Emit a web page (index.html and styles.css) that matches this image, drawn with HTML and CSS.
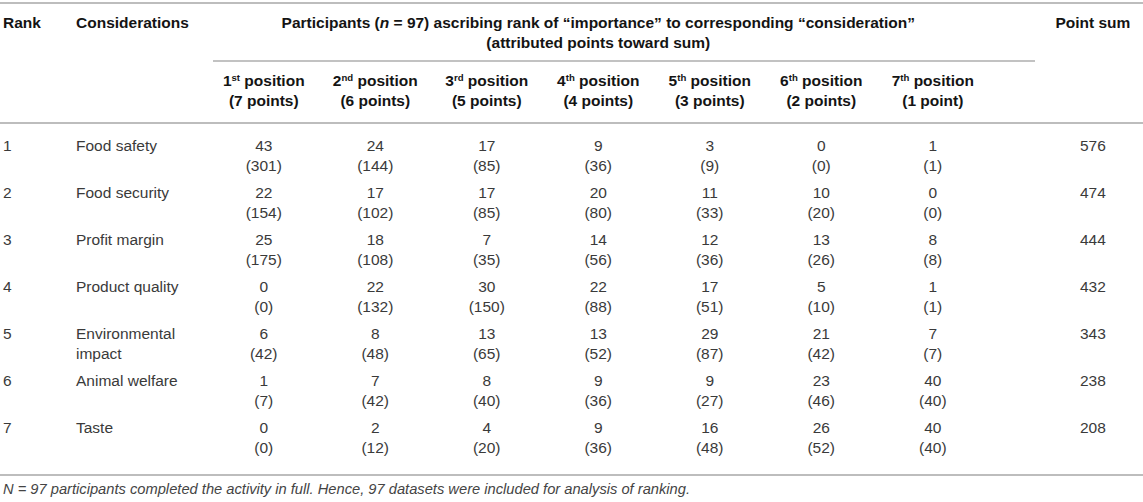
FILE: index.html
```html
<!doctype html>
<html>
<head>
<meta charset="utf-8">
<link rel="stylesheet" href="styles.css">
<title>Ranking of considerations</title>
</head>
<body>
<table class="rank-table">
<colgroup>
<col class="c-rank">
<col class="c-name">
<col class="c-pos"><col class="c-pos"><col class="c-pos"><col class="c-pos"><col class="c-pos"><col class="c-pos"><col class="c-pos">
<col class="c-sum">
</colgroup>
<thead>
<tr class="head-top">
<th rowspan="2" class="rank">Rank</th>
<th rowspan="2" class="name">Considerations</th>
<th colspan="7" class="group">
<div class="group-text">Participants (<i>n</i> = 97) ascribing rank of “importance” to corresponding “consideration”<br>(attributed points toward sum)</div>
<div class="group-rule"></div>
</th>
<th rowspan="2" class="sum">Point sum</th>
</tr>
<tr class="head-sub">
<th>1<sup>st</sup> position<br>(7 points)</th>
<th>2<sup>nd</sup> position<br>(6 points)</th>
<th>3<sup>rd</sup> position<br>(5 points)</th>
<th>4<sup>th</sup> position<br>(4 points)</th>
<th>5<sup>th</sup> position<br>(3 points)</th>
<th>6<sup>th</sup> position<br>(2 points)</th>
<th>7<sup>th</sup> position<br>(1 point)</th>
</tr>
</thead>
<tbody>
<tr>
<td class="rank">1</td><td class="name">Food safety</td>
<td>43<br>(301)</td><td>24<br>(144)</td><td>17<br>(85)</td><td>9<br>(36)</td><td>3<br>(9)</td><td>0<br>(0)</td><td>1<br>(1)</td>
<td class="sum">576</td>
</tr>
<tr>
<td class="rank">2</td><td class="name">Food security</td>
<td>22<br>(154)</td><td>17<br>(102)</td><td>17<br>(85)</td><td>20<br>(80)</td><td>11<br>(33)</td><td>10<br>(20)</td><td>0<br>(0)</td>
<td class="sum">474</td>
</tr>
<tr>
<td class="rank">3</td><td class="name">Profit margin</td>
<td>25<br>(175)</td><td>18<br>(108)</td><td>7<br>(35)</td><td>14<br>(56)</td><td>12<br>(36)</td><td>13<br>(26)</td><td>8<br>(8)</td>
<td class="sum">444</td>
</tr>
<tr>
<td class="rank">4</td><td class="name">Product quality</td>
<td>0<br>(0)</td><td>22<br>(132)</td><td>30<br>(150)</td><td>22<br>(88)</td><td>17<br>(51)</td><td>5<br>(10)</td><td>1<br>(1)</td>
<td class="sum">432</td>
</tr>
<tr>
<td class="rank">5</td><td class="name">Environmental impact</td>
<td>6<br>(42)</td><td>8<br>(48)</td><td>13<br>(65)</td><td>13<br>(52)</td><td>29<br>(87)</td><td>21<br>(42)</td><td>7<br>(7)</td>
<td class="sum">343</td>
</tr>
<tr>
<td class="rank">6</td><td class="name">Animal welfare</td>
<td>1<br>(7)</td><td>7<br>(42)</td><td>8<br>(40)</td><td>9<br>(36)</td><td>9<br>(27)</td><td>23<br>(46)</td><td>40<br>(40)</td>
<td class="sum">238</td>
</tr>
<tr>
<td class="rank">7</td><td class="name">Taste</td>
<td>0<br>(0)</td><td>2<br>(12)</td><td>4<br>(20)</td><td>9<br>(36)</td><td>16<br>(48)</td><td>26<br>(52)</td><td>40<br>(40)</td>
<td class="sum">208</td>
</tr>
</tbody>
</table>
<p class="note"><i>N</i> = 97 participants completed the activity in full. Hence, 97 datasets were included for analysis of ranking.</p>
</body>
</html>
```

FILE: styles.css
```css
body {
    margin: 0;
    background-color: white;
    font-family: "Liberation Sans", Arial, Helvetica, sans-serif;
    font-size: 15.5px;
    line-height: 20px;
    color: #3a3a3a;
}
.rank-table {
    width: 1143px;
    margin: 2px 0 0 0;
    table-layout: fixed;
    border-collapse: separate;
    border-spacing: 0;
}
.c-rank { width: 72px; }
.c-name { width: 136px; }
.c-pos { width: 111.5px; }
.c-sum { width: 154.5px; }

th,
td {
    padding: 0;
    text-align: center;
    vertical-align: top;
}
th {
    color: #141414;
    font-weight: bold;
}
.rank {
    text-align: left;
    padding-left: 3px;
}
.name {
    text-align: left;
    padding-left: 4px;
    padding-right: 8px;
}
.sum {
    padding-left: 64px;
    padding-right: 10px;
    white-space: nowrap;
}
sup {
    font-size: 0.62em;
    line-height: 0;
    vertical-align: 0.55em;
}

/* header rules */
.head-top th {
    border-top: 2px solid #bdbdbd;
    padding-top: 9px;
}
.head-top th.rank,
.head-top th.name,
.head-top th.sum {
    border-bottom: 2px solid #bdbdbd;
}
.group-text {
    padding-bottom: 7px;
}
.group-rule {
    border-bottom: 2px solid #c2c2c2;
    margin: 0 -46.5px 0 5px;
}
.head-sub th {
    padding: 9px 0 11px 0;
    border-bottom: 2px solid #bdbdbd;
}

/* body rows */
tbody td {
    padding-top: 6px;
    padding-bottom: 1px;
}
tbody tr:first-child td {
    padding-top: 12px;
}
tbody tr:last-child td {
    padding-bottom: 16px;
    border-bottom: 2px solid #bdbdbd;
}

.note {
    margin: 0;
    padding: 3px 0 0 3px;
    font-size: 14.7px;
    font-style: italic;
    color: #444;
}
```
